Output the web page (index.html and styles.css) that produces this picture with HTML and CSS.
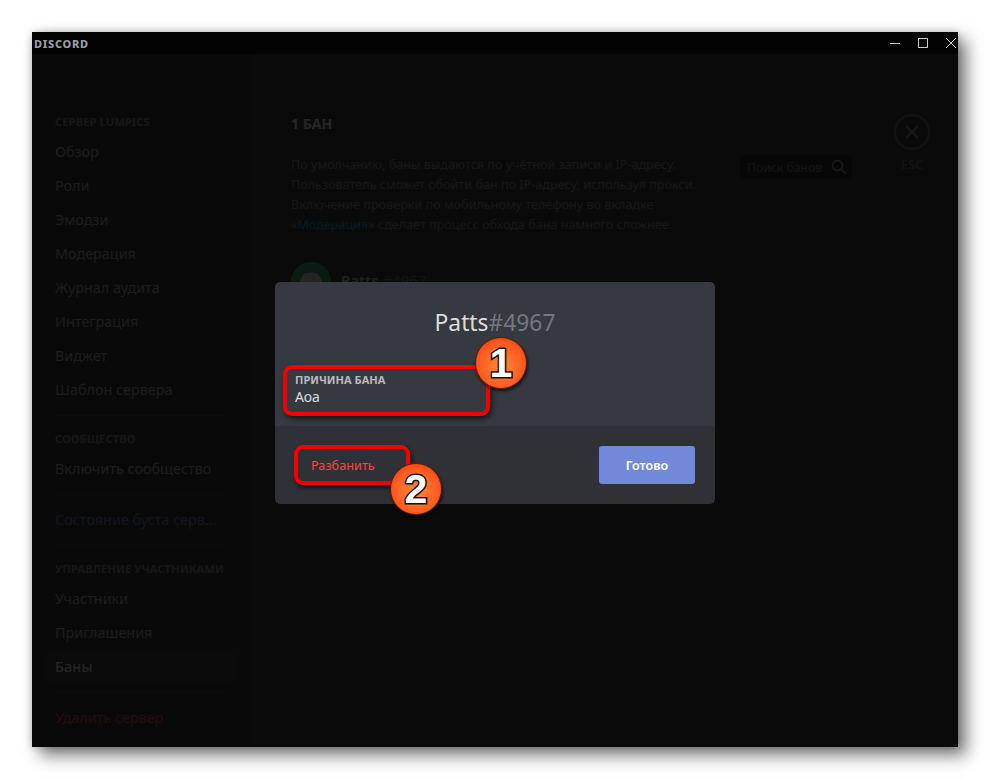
FILE: index.html
```html
<!DOCTYPE html>
<html lang="ru">
<head>
    <meta charset="UTF-8">
    <title>Discord</title>
    <link rel="stylesheet" href="styles.css">
</head>
<body>
    <div class="window">
        <div class="titlebar">
            <span class="logo">DISCORD</span>
            <div class="controls">
                <svg width="14" height="14" viewBox="0 0 14 14"><path d="M2 7.5h10" stroke="#c8c8c8" fill="none"/></svg>
                <svg width="14" height="14" viewBox="0 0 14 14"><rect x="2.5" y="2.5" width="9" height="9" stroke="#c8c8c8" fill="none"/></svg>
                <svg width="14" height="14" viewBox="0 0 14 14"><path d="M2 2l10 10M12 2L2 12" stroke="#c8c8c8" fill="none"/></svg>
            </div>
        </div>
        <div class="content">
            <div class="sidebar">
                <div class="side-head">СЕРВЕР LUMPICS</div>
                <div class="side-item">Обзор</div>
                <div class="side-item">Роли</div>
                <div class="side-item">Эмодзи</div>
                <div class="side-item">Модерация</div>
                <div class="side-item">Журнал аудита</div>
                <div class="side-item">Интеграция</div>
                <div class="side-item">Виджет</div>
                <div class="side-item">Шаблон сервера</div>
                <div class="side-line before-head"></div>
                <div class="side-head">СООБЩЕСТВО</div>
                <div class="side-item">Включить сообщество</div>
                <div class="side-line"></div>
                <div class="side-item boost">Состояние буста серв...</div>
                <div class="side-line before-head"></div>
                <div class="side-head">УПРАВЛЕНИЕ УЧАСТНИКАМИ</div>
                <div class="side-item">Участники</div>
                <div class="side-item">Приглашения</div>
                <div class="side-item active">Баны</div>
                <div class="side-line"></div>
                <div class="side-item danger">Удалить сервер</div>
            </div>
            <div class="main">
                <div class="main-col">
                    <h2 class="main-title">1 БАН</h2>
                    <div class="info-row">
                        <p class="info">По умолчанию, баны выдаются по учётной записи и IP-адресу. Пользователь сможет обойти бан по IP-адресу, используя прокси. Включение проверки по мобильному телефону во вкладке «<a class="link">Модерация</a>» сделает процесс обхода бана намного сложнее.</p>
                        <div class="search">
                            <span>Поиск банов</span>
                            <svg width="16" height="16" viewBox="0 0 16 16"><circle cx="6.5" cy="6.5" r="5" stroke="#b9bbbe" stroke-width="1.6" fill="none"/><path d="M10.2 10.2l4.6 4.6" stroke="#b9bbbe" stroke-width="1.6"/></svg>
                        </div>
                    </div>
                    <div class="main-line"></div>
                    <div class="user">
                        <div class="avatar">
                            <svg width="26" height="20" viewBox="0 0 26 20"><path d="M6 2c4-2 10-2 14 0 3 4 5 9 5 15-2 1.500-4 2.500-6 3l-1.500-3h-9L7 20c-2-.5-4-1.500-6-3 0-6 2-11 5-15z" fill="#fff"/></svg>
                        </div>
                        <div class="user-text"><span class="user-name">Patts</span> <span class="user-tag">#4967</span></div>
                    </div>
                </div>
                <div class="close">
                    <div class="close-circle">
                        <svg width="16" height="16" viewBox="0 0 16 16"><path d="M2 2l12 12M14 2L2 14" stroke="#b9bbbe" stroke-width="1.6"/></svg>
                    </div>
                    <span>ESC</span>
                </div>
            </div>
            <div class="overlay"></div>
            <div class="modal">
                <div class="modal-top">
                    <div class="modal-title">Patts<span class="modal-tag">#4967</span></div>
                    <div class="field-label">ПРИЧИНА БАНА</div>
                    <div class="field-value">Аоа</div>
                </div>
                <div class="modal-foot">
                    <button class="btn-unban">Разбанить</button>
                    <button class="btn-done">Готово</button>
                </div>
                <div class="mark mark-reason"></div>
                <div class="mark mark-unban"></div>
                <div class="badge badge-one">1</div>
                <div class="badge badge-two">2</div>
            </div>
        </div>
    </div>
</body>
</html>
```

FILE: styles.css
```css
* {
    box-sizing: border-box;
}
body {
    margin: 0;
    padding: 32px;
    background: #fff;
    font-family: "Noto Sans", "Open Sans", sans-serif;
}
.window {
    width: 926px;
    height: 715px;
    display: flex;
    flex-direction: column;
    background: #0a0a0a;
    box-shadow: 8px 8px 16px rgba(0, 0, 0, 0.55), 0 0 8px rgba(0, 0, 0, 0.2);
}
.titlebar {
    height: 22px;
    flex: none;
    display: flex;
    justify-content: space-between;
    align-items: center;
    background: #030303;
}
.logo {
    font-size: 11px;
    font-weight: 800;
    letter-spacing: 0.7px;
    color: #9a9ea3;
    margin-left: 2px;
}
.controls {
    display: flex;
    gap: 14px;
}
.controls svg {
    display: block;
}
.content {
    flex: 1;
    display: flex;
    position: relative;
    min-height: 0;
}
.sidebar {
    width: 220px;
    flex: none;
    padding: 60px 14px 0 13px;
    background: #2f3136;
}
.side-head {
    font-size: 11.3px;
    font-weight: 700;
    line-height: 16px;
    color: #8e9297;
    padding-left: 10px;
    margin-bottom: 5px;
}
.side-item {
    height: 32px;
    line-height: 34px;
    margin-bottom: 2px;
    padding-left: 10px;
    border-radius: 3px;
    font-size: 14.4px;
    color: #b9bbbe;
    white-space: nowrap;
}
.side-item.active {
    background: #393c43;
    color: #fff;
    font-weight: 500;
}
.side-item.boost {
    color: #7289da;
}
.side-item.danger {
    color: #f04747;
}
.side-line {
    height: 1px;
    margin: 10px 10px 8px;
    background: #42454a;
}
.side-line.before-head {
    margin-bottom: 15px;
}
.main {
    flex: 1;
    display: flex;
    background: #36393f;
    padding: 60px 0 0 39px;
}
.main-col {
    width: 561px;
}
.main-title {
    margin: 2px 0 23px;
    font-size: 14px;
    font-weight: 700;
    line-height: 16px;
    color: #fff;
}
.info-row {
    display: flex;
    justify-content: space-between;
}
.info {
    margin: 0;
    width: 410px;
    font-size: 12.6px;
    line-height: 20px;
    color: #8e9297;
}
.link {
    color: #00b0f4;
}
.search {
    width: 112px;
    height: 24px;
    display: flex;
    align-items: center;
    justify-content: space-between;
    padding: 0 5px 0 7px;
    border-radius: 3px;
    background: #202225;
    font-size: 12.2px;
    color: #72767d;
}
.main-line {
    height: 1px;
    margin-top: 18px;
    background: #42454a;
}
.user {
    display: flex;
    margin-top: 8px;
    font-size: 15px;
    font-weight: 600;
    color: #dcddde;
}
.avatar {
    width: 40px;
    height: 40px;
    margin-right: 10px;
    display: flex;
    align-items: center;
    justify-content: center;
    border-radius: 50%;
    background: #43b581;
}
.user-text {
    margin-top: 8px;
    line-height: 20px;
}
.user-tag {
    color: #72767d;
    font-weight: 400;
}
.close {
    margin-left: 42px;
    display: flex;
    flex-direction: column;
    align-items: center;
    color: #72767d;
    font-size: 13px;
    font-weight: 600;
}
.close-circle {
    width: 36px;
    height: 36px;
    margin-bottom: 5px;
    display: flex;
    align-items: center;
    justify-content: center;
    border: 2px solid #72767d;
    border-radius: 50%;
}
.overlay {
    position: absolute;
    top: 0;
    left: 0;
    right: 0;
    bottom: 0;
    background: rgba(3, 3, 3, 0.87);
}
.modal {
    position: absolute;
    top: 228px;
    left: 243px;
    width: 440px;
    height: 222px;
    display: flex;
    flex-direction: column;
    border-radius: 5px;
}
.modal-top {
    height: 144px;
    padding: 25px 20px 0;
    background: #36393f;
    border-radius: 5px 5px 0 0;
}
.modal-title {
    text-align: center;
    font-size: 22.8px;
    line-height: 32px;
    color: #dcddde;
    margin-bottom: 33px;
}
.modal-tag {
    color: #72767d;
}
.field-label {
    font-size: 11px;
    font-weight: 700;
    line-height: 16px;
    color: #b9bbbe;
}
.field-value {
    font-size: 14px;
    line-height: 18px;
    color: #dcddde;
}
.modal-foot {
    flex: 1;
    display: flex;
    justify-content: space-between;
    align-items: center;
    padding: 0 20px 0 36px;
    background: #2f3136;
    border-radius: 0 0 5px 5px;
}
.btn-unban {
    padding: 0;
    border: 0;
    background: none;
    font: 12.7px "Noto Sans", sans-serif;
    color: #f04747;
}
.btn-done {
    width: 96px;
    height: 38px;
    border: 0;
    border-radius: 3px;
    background: #7289da;
    color: #fff;
    font: 600 12.5px "Noto Sans", sans-serif;
}
.mark {
    position: absolute;
    border: 4px solid #f40000;
    border-radius: 9px;
    box-shadow: 2px 3px 5px rgba(0, 0, 0, 0.6);
}
.mark-reason {
    left: 8px;
    top: 83px;
    width: 207px;
    height: 51px;
}
.mark-unban {
    left: 19px;
    top: 163px;
    width: 116px;
    height: 40px;
}
.badge {
    position: absolute;
    width: 52px;
    height: 52px;
    border-radius: 50%;
    border: 1px solid #6a1a00;
    background: radial-gradient(circle at 50% 55%, #ff8a3a 0%, #ff5a20 60%, #d92c08 100%);
    box-shadow: 1px 2px 3px rgba(0, 0, 0, 0.7);
    text-align: center;
    font: 700 41px/50px "Liberation Sans", sans-serif;
    color: #fff;
    -webkit-text-stroke: 3px #111;
    paint-order: stroke fill;
}
.badge-one {
    left: 200px;
    top: 55px;
}
.badge-two {
    left: 115px;
    top: 181px;
}
```
